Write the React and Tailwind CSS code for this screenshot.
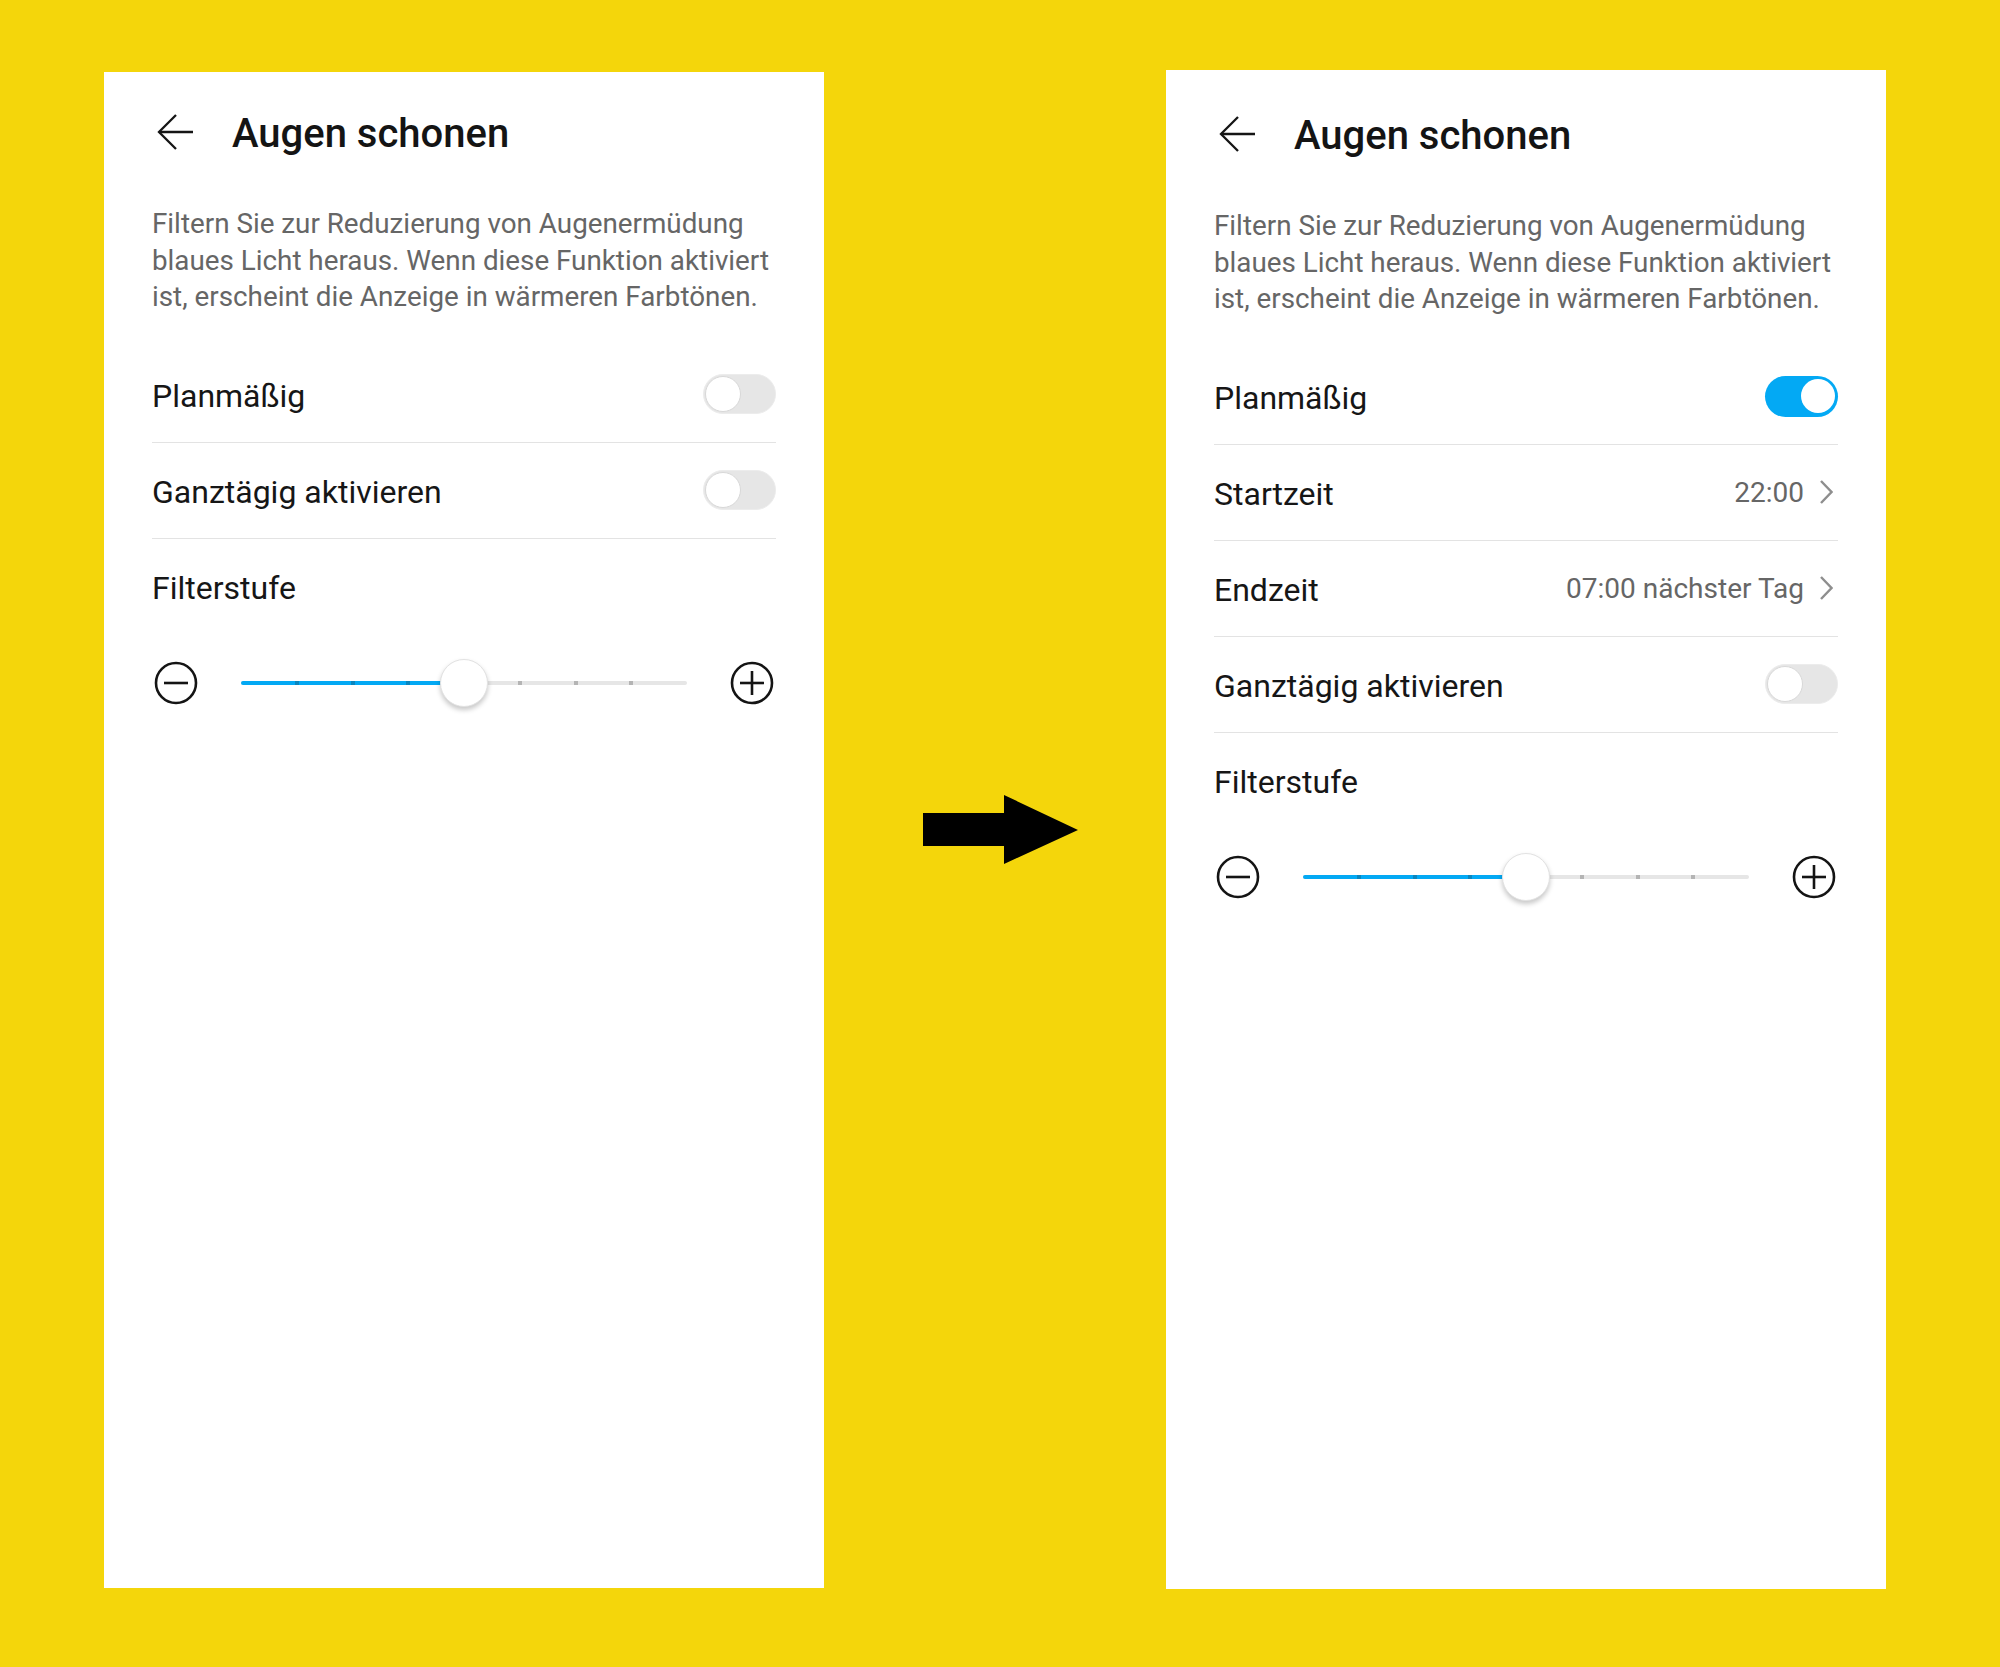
import React from "react";

function BackArrow() {
  return (
    <svg width="36" height="36" viewBox="0 0 36 36" className="ml-[5px] mb-[5px] shrink-0" fill="none" stroke="#151515" strokeWidth="2.3">
      <path d="M2 18 H36" />
      <path d="M19 1 L2 18 L19 35" strokeLinejoin="miter" />
    </svg>
  );
}

function Toggle({ on }) {
  if (on) {
    return (
      <div className="w-[73px] h-[41px] rounded-full bg-[#03a9f4] flex items-center justify-end pr-[3px] shrink-0">
        <div className="w-[34px] h-[34px] rounded-full bg-white" />
      </div>
    );
  }
  return (
    <div className="w-[73px] h-[40px] rounded-full bg-[#e6e6e6] border border-[#ececec] flex items-center pl-[1px] shrink-0">
      <div className="w-[36px] h-[36px] rounded-full bg-white border-[1.5px] border-[#d8d8d8]" />
    </div>
  );
}

function Chevron() {
  return (
    <svg width="14" height="24" viewBox="0 0 14 24" className="ml-[15px] mr-[5px] shrink-0" fill="none" stroke="#8e8e8e" strokeWidth="2.4">
      <path d="M2 1 L12.5 12 L2 23" />
    </svg>
  );
}

function Row({ label, children }) {
  return (
    <div className="h-[96px] flex items-center justify-between border-b border-[#e3e3e3]">
      <div className="text-[32px] leading-[40px] pt-[3px] text-[#161616]">{label}</div>
      <div className="flex items-center">{children}</div>
    </div>
  );
}

function Value({ children }) {
  return <div className="text-[28px] leading-[40px] pt-[1px] text-[#666666]">{children}</div>;
}

function RoundIcon({ plus }) {
  return (
    <svg width="48" height="48" viewBox="0 0 48 48" className="shrink-0" fill="none" stroke="#141414" strokeWidth="2.6">
      <circle cx="24" cy="24" r="20" />
      <path d="M12 24 H36" />
      {plus ? <path d="M24 12 V36" /> : null}
    </svg>
  );
}

function Slider() {
  const ticks = [1, 2, 3, 5, 6, 7];
  return (
    <div className="flex items-center h-[48px] mt-[51px]">
      <RoundIcon />
      <div className="relative flex-1 h-[48px] mx-[41px]">
        <div className="absolute left-0 right-0 top-[22px] h-[4px] rounded-full bg-[#e6e6e6]" />
        <div className="absolute left-0 w-1/2 top-[22px] h-[4px] rounded-full bg-[#03a9f4]" />
        {ticks.map((t) => (
          <div
            key={t}
            className={
              "absolute top-[22px] w-[4px] h-[4px] -ml-[2px] " +
              (t < 4 ? "bg-[#0a86bf]" : "bg-[#b4b4b4]")
            }
            style={{ left: `${(t / 8) * 100}%` }}
          />
        ))}
        <div className="absolute left-1/2 top-0 -ml-[24px] w-[48px] h-[48px] rounded-full bg-white border border-[#e2e2e2] shadow-[0_3px_5px_rgba(0,0,0,0.22)]" />
      </div>
      <RoundIcon plus />
    </div>
  );
}

function Panel({ extended, className }) {
  return (
    <div className={"w-[720px] bg-white px-12 shrink-0 " + className}>
      <div className="flex items-center h-[46px]">
        <BackArrow />
        <div className="ml-[39px] text-[40px] leading-[46px] font-medium text-[#141414] whitespace-nowrap">
          Augen schonen
        </div>
      </div>
      <div className="mt-[49px] text-[27.8px] leading-[36.5px] text-[#666666] whitespace-nowrap">
        Filtern Sie zur Reduzierung von Augenermüdung
        <br />
        blaues Licht heraus. Wenn diese Funktion aktiviert
        <br />
        ist, erscheint die Anzeige in wärmeren Farbtönen.
      </div>
      <div className="mt-[31px]">
        <Row label="Planmäßig">
          <Toggle on={extended} />
        </Row>
        {extended ? (
          <>
            <Row label="Startzeit">
              <Value>22:00</Value>
              <Chevron />
            </Row>
            <Row label="Endzeit">
              <Value>07:00 nächster Tag</Value>
              <Chevron />
            </Row>
          </>
        ) : null}
        <Row label="Ganztägig aktivieren">
          <Toggle on={false} />
        </Row>
      </div>
      <div className="pt-[29px] text-[32px] leading-[40px] text-[#161616]">Filterstufe</div>
      <Slider />
    </div>
  );
}

export default function App() {
  return (
    <div className="w-[2000px] h-[1667px] bg-[#f4d60b] flex items-start font-['Roboto',sans-serif]">
      <Panel extended={false} className="ml-[104px] mt-[72px] h-[1516px] pt-[39px]" />
      <div className="w-[342px] shrink-0 mt-[795px] pl-[99px]">
        <svg width="156" height="70" viewBox="0 0 156 70">
          <polygon points="0,18 81,18 81,0 155,35 81,69 81,51 0,51" fill="#000" />
        </svg>
      </div>
      <Panel extended={true} className="mt-[70px] h-[1519px] pt-[43px]" />
    </div>
  );
}
